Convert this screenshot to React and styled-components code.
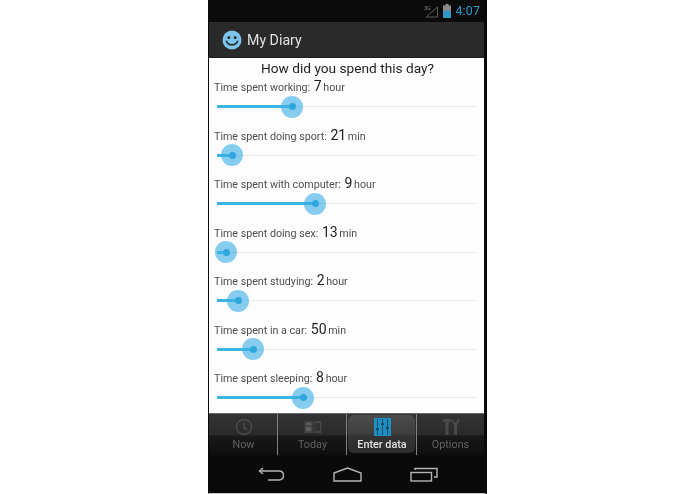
import React from "react";
import styled, { createGlobalStyle } from "styled-components";

const Global = createGlobalStyle`
  html, body { margin: 0; padding: 0; background: #fff; }
  body { width: 695px; height: 494px; overflow: hidden; font-family: Roboto, "Liberation Sans", sans-serif; }
`;
const Stage = styled.div`
  width: 695px; height: 494px; display: flex; justify-content: flex-start; padding-left: 208px; box-sizing: border-box;
`;
const Phone = styled.div`
  width: 279px; height: 494px; box-sizing: border-box; background: #000;
  border-left: 1px solid #0a0a0a; border-right: 3px solid #0a0a0a; border-bottom: 1.5px solid #c8c8c8;
  display: flex; flex-direction: column; overflow: hidden; filter: blur(0.45px);
`;
const StatusBar = styled.div`
  height: 22px; flex: none; background: #0b0b0b; display: flex; align-items: center; justify-content: flex-end;
  gap: 4px; padding-right: 4px;
`;
const Clock = styled.span`
  font-size: 12.3px; color: #2c9bc8; letter-spacing: .2px;
`;
const ActionBar = styled.div`
  height: 36px; flex: none; box-sizing: border-box; background: #2a2a2a; border-bottom: 1px solid #1e1e1e;
  display: flex; align-items: center; padding-left: 13px; gap: 5px; box-shadow: 0 1px 2px rgba(0,0,0,.3);
`;
const SmileWrap = styled.div`
  display: flex; margin-top: 1px;
`;
const Title = styled.span`
  font-size: 14.2px; color: #e0e0e0; margin-top: 1px;
`;
const Content = styled.div`
  height: 355px; flex: none; box-sizing: border-box; background: #fdfdfd; overflow: hidden; padding: 2px 0 0 5px;
  display: flex; flex-direction: column;
`;
const Heading = styled.div`
  height: 17px; line-height: 17px; text-align: center; font-size: 13.7px; color: #1e1e1e; padding-right: 3px;
`;
const Row = styled.div`
  height: 48.5px; flex: none; display: flex; flex-direction: column;
`;
const Label = styled.div`
  height: 17px; line-height: 17px; font-size: 10.7px; color: #4e4e4e; margin-top: 1px; white-space: nowrap;
`;
const Value = styled.span`
  font-size: 14px; color: #222; margin: 0 -1px 0 1px;
`;
const Track = styled.div`
  position: relative; height: 1px; background: #e8e8e8; margin: 11px 0 0 3px; width: 260px; flex: none;
`;
const Fill = styled.div`
  height: 3px; margin-top: -1px; background: #3cb4e2;
`;
const Thumb = styled.div`
  position: absolute; top: 0.5px; width: 22px; height: 22px; margin: -11px 0 0 -11px; border-radius: 50%;
  background: rgba(60,175,230,.62); display: flex; align-items: center; justify-content: center;
  &::after { content: ""; width: 7px; height: 7px; border-radius: 50%; background: #2fa6dc; }
`;
const TabBar = styled.div`
  height: 42px; flex: none; box-sizing: border-box; display: grid; grid-template-columns: 69px 69px 70px 1fr;
  background: linear-gradient(#333 0, #2b2b2b 50%, #191919 54%, #0e0e0e 100%); border-top: 1px solid #666;
`;
const Tab = styled.div`
  position: relative; display: flex; flex-direction: column; align-items: center; padding-top: 3px; box-sizing: border-box;
  color: ${p => p.$active ? "#e4e4e4" : "#626262"};
  &::after {
    content: ""; position: absolute; right: 0; top: 0; bottom: 0; width: 1px;
    background: ${p => p.$last ? "transparent" : "#808080"};
  }
`;
const TabPill = styled.div`
  position: absolute; left: 1px; right: 2px; top: 1px; bottom: 2px; border-radius: 6px;
  background: linear-gradient(#4c4c4c, #3e3e3e 50%, #333 55%, #2e2e2e);
`;
const TabIcon = styled.div`
  position: relative; height: 20px; display: flex; align-items: center; justify-content: center;
`;
const TabLabel = styled.span`
  position: relative; font-size: 10.8px; line-height: 14px; margin-top: 1px; font-weight: ${p => p.$active ? 500 : 400};
`;
const NavBar = styled.div`
  flex: 1; min-height: 0; background: #0a0a0a; display: grid; grid-template-columns: repeat(3, 76.5px); padding-left: 24px; align-items: center; justify-items: center;
`;

const rows = [
  ["Time spent working:", "7", "hour", 75],
  ["Time spent doing sport:", "21", "min", 15],
  ["Time spent with computer:", "9", "hour", 98],
  ["Time spent doing sex:", "13", "min", 9],
  ["Time spent studying:", "2", "hour", 21],
  ["Time spent in a car:", "50", "min", 36],
  ["Time spent sleeping:", "8", "hour", 86],
];

const Smile = () => (
  <svg width="20" height="20" viewBox="0 0 20 20">
    <circle cx="10" cy="10" r="9.5" fill="#7cc4ec" />
    <circle cx="6.8" cy="7.4" r="1.5" fill="#2a2a2a" />
    <circle cx="13.2" cy="7.4" r="1.5" fill="#2a2a2a" />
    <path d="M4.5 11.2 C6 16 14 16 15.5 11.2" fill="none" stroke="#2a2a2a" strokeWidth="1.6" strokeLinecap="round" />
  </svg>
);
const Signal = () => (
  <svg width="16" height="14" viewBox="0 0 16 14">
    <text x="1" y="6" fontSize="5.5" fill="#888" fontFamily="Roboto">3G</text>
    <path d="M3 13 L14.5 3 V13 Z" fill="none" stroke="#5a5a5a" strokeWidth="1" />
  </svg>
);
const Battery = () => (
  <svg width="8" height="14" viewBox="0 0 8 14">
    <rect x="2.5" y="0" width="3" height="2" fill="#999" />
    <rect x="0" y="1.5" width="8" height="12.5" fill="#8a8a8a" />
    <rect x="0" y="7" width="8" height="7" fill="#2c9bc8" />
  </svg>
);
const ClockIcon = () => (
  <svg width="18" height="18" viewBox="0 0 18 18" fill="none" stroke="#4a4a4a" strokeWidth="1.6">
    <circle cx="9" cy="9" r="7.4" />
    <path d="M9 4.5 V9.5 L12 11.5" />
  </svg>
);
const BookIcon = () => (
  <svg width="18" height="14" viewBox="0 0 18 14">
    <rect x="0.5" y="1" width="17" height="12" fill="#454545" />
    <rect x="2" y="3" width="5" height="2" fill="#5e5e5e" />
    <rect x="2" y="7" width="5" height="4" fill="#5e5e5e" />
    <rect x="10.5" y="3" width="5.5" height="8" fill="#333" />
    <rect x="8.6" y="1" width="1" height="12" fill="#2e2e2e" />
  </svg>
);
const SlidersIcon = () => (
  <svg width="17" height="18" viewBox="0 0 17 18">
    <rect width="17" height="18" fill="#1e8fc0" />
    <path d="M3.5 1 V17 M8.5 1 V17 M13.5 1 V17" stroke="#0f4f6e" strokeWidth="1" />
    <rect x="2" y="10" width="3" height="2.2" fill="#0f4f6e" />
    <rect x="7" y="5" width="3" height="2.2" fill="#0f4f6e" />
    <rect x="12" y="9" width="3" height="2.2" fill="#0f4f6e" />
  </svg>
);
const ToolsIcon = () => (
  <svg width="18" height="18" viewBox="0 0 18 18" fill="#4a4a4a">
    <path d="M1 1 H9 V4 H6.5 V17 H3.5 V4 H1 Z" />
    <path d="M11 1 L12.5 4.5 H14 L15.5 1 H17 V4 L15 7 V17 H12 V7 L10 4 V1 Z" />
  </svg>
);
const Back = () => (
  <svg width="27" height="14" viewBox="0 0 27 14" fill="none" stroke="#b4b4b4" strokeWidth="1.4">
    <path d="M5 1 L1.5 4 L5 7" />
    <path d="M1.5 4 H21 Q25.5 4 25.5 8.5 Q25.5 13 21 13 H10" />
  </svg>
);
const Home = () => (
  <svg width="29" height="15" viewBox="0 0 29 15" fill="none" stroke="#b4b4b4" strokeWidth="1.4">
    <path d="M1 6 L14.5 1 L28 6 V14 H1 Z" />
  </svg>
);
const Recent = () => (
  <svg width="28" height="15" viewBox="0 0 28 15" fill="none" stroke="#b4b4b4" strokeWidth="1.4">
    <rect x="1" y="5.5" width="20.5" height="8.5" />
    <path d="M5 3 V1.5 H27 V10 H24" />
  </svg>
);

const tabs = [
  ["Now", <ClockIcon />],
  ["Today", <BookIcon />],
  ["Enter data", <SlidersIcon />, true],
  ["Options", <ToolsIcon />],
];

export default function App() {
  return (
    <Stage>
      <Global />
      <Phone>
        <StatusBar>
          <Signal />
          <Battery />
          <Clock>4:07</Clock>
        </StatusBar>
        <ActionBar>
          <SmileWrap><Smile /></SmileWrap>
          <Title>My Diary</Title>
        </ActionBar>
        <Content>
          <Heading>How did you spend this day?</Heading>
          {rows.map(([label, value, unit, pos]) => (
            <Row key={label}>
              <Label>
                {label} <Value>{value}</Value> {unit}
              </Label>
              <Track>
                <Fill style={{ width: pos }} />
                <Thumb style={{ left: pos }} />
              </Track>
            </Row>
          ))}
        </Content>
        <TabBar>
          {tabs.map(([name, icon, active], i) => (
            <Tab key={name} $active={active} $last={i === 3}>
              {active && <TabPill />}
              <TabIcon>{icon}</TabIcon>
              <TabLabel $active={active}>{name}</TabLabel>
            </Tab>
          ))}
        </TabBar>
        <NavBar>
          <Back />
          <Home />
          <Recent />
        </NavBar>
      </Phone>
    </Stage>
  );
}
